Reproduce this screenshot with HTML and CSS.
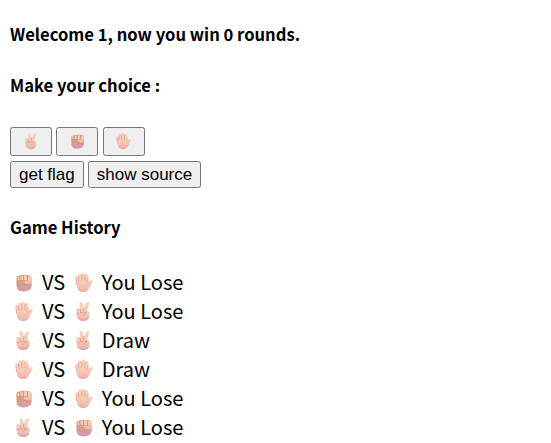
FILE: index.html
```html
<!DOCTYPE html>
<html lang="en">
<head>
<meta charset="utf-8">
<title>Game</title>
<link rel="stylesheet" href="styles.css">
</head>
<body>
<svg class="defs" width="0" height="0" aria-hidden="true">
  <defs>
    <linearGradient id="skin" x1="0" y1="0" x2="0" y2="1"><stop offset="0" stop-color="#f6d5bd"/><stop offset=".55" stop-color="#f6c8b7"/><stop offset="1" stop-color="#eeb0ac"/></linearGradient>
    <linearGradient id="dark" x1="0" y1="0" x2=".25" y2="1"><stop offset="0" stop-color="#c79882"/><stop offset=".55" stop-color="#cf9f8f"/><stop offset="1" stop-color="#d99ba5"/></linearGradient>
    <symbol id="victory" viewBox="0 0 27 29">
      <path fill="url(#skin)" d="M6.2 14.5Q5.5 11 8 10.7L9.9 12 9.4 6.3C9.3 4.7 11.8 4.4 12.2 6L13.5 10.8 16.3 5.7C17.1 4.2 19.6 5.1 19 6.8L17.1 13Q19.6 14.6 19.4 18.5C19.2 22.2 16.7 24 13 24 9 24 6.7 21.6 6.4 18Z"/>
      <path fill="none" stroke="#d79b8b" stroke-width=".8" stroke-linecap="round" d="M6.6 16.2Q9 17.7 10.5 15.7L10 12.2M10.5 15.7Q14.4 14.2 16.5 16Q14 16.4 13 18.5M13.5 10.8 13.2 13.8"/>
      <path fill="#dd9ca5" opacity=".6" d="M7 20Q12.5 23.8 18.9 20.3Q17 24 13 24 9 24 7 20Z"/>
    </symbol>
    <symbol id="fist" viewBox="0 0 27 29">
      <path fill="url(#dark)" d="M6.2 10Q6.3 7.3 9 7.7 11 6.3 13.3 7.1 15.8 6.1 17.6 7.3 21.3 6.8 21.4 10L21.5 17C21.4 21.6 18 23.5 13.5 23.4 9 23.4 6.6 21.6 6.3 18Z"/>
      <path fill="#f3cba9" d="M9.9 8Q11.7 6.4 12.9 8.1V12H10.2ZM13.8 8Q15.7 6 17 8V12H13.8ZM17.8 8.2Q21.2 6.9 21.2 10.2V13H17.8ZM7 10Q7 8.2 8.8 8.5L9.2 12H7.3Z"/>
      <path fill="#efbda8" d="M12 13.5Q15 11.8 20.5 12.8 22.3 14.6 20.4 16.2 17.8 16.9 14.8 15.5Z"/>
      <path fill="#d99b8c" d="M7 12.5Q10 11.5 13 13L14.5 15.5Q11 17 7 15Z"/>
      <path fill="none" stroke="#c58a7c" stroke-width=".5" stroke-linecap="round" d="M9.6 8.5 9.9 12M13.3 8V12M17.4 8V12M14 16.4Q17 17.3 20 16.8"/>
    </symbol>
    <symbol id="palm" viewBox="0 0 27 29">
      <path fill="url(#skin)" d="M5.2 10Q5.2 8.1 6.6 8.1 7.7 8.1 8.1 9.3L8 6.8Q8.2 5.4 9.6 5.4 10.9 5.4 11.2 6.5L11.4 5.8Q11.9 4.4 13.2 4.5 14.6 4.6 14.8 6L15.1 7.1Q15.8 5.7 17 6 18.3 6.3 18.2 7.8L17.9 14.2 20.4 12.3Q21.6 11.5 22.3 12.5 22.8 13.2 22 14.5L19.2 19.5C17.9 22.4 16.2 24 13 24 9.4 24 7.4 22 6.7 18.5Z"/>
      <path fill="none" stroke="#d99c90" stroke-width=".65" stroke-linecap="round" d="M5.6 11.2 6.5 16.6M8.2 8.7 8.6 13M11.3 7 11.6 12.5M14.8 7 14.8 12.5M17.8 10V14.3"/>
      <path fill="#e4a6a9" opacity=".55" d="M7 20Q9 22.7 13 22.6 17 22.5 19 20Q16.5 24 13 24 8.7 24 7 20Z"/>
    </symbol>
  </defs>
</svg>
<h5>Welecome 1, now you win 0 rounds.</h5>
<h5>Make your choice :</h5>
<div class="controls">
  <div class="choices">
    <button aria-label="scissors"><svg><use href="#victory"/></svg></button>
    <button aria-label="rock"><svg><use href="#fist"/></svg></button>
    <button aria-label="paper"><svg><use href="#palm"/></svg></button>
  </div>
  <div class="actions"><button>get flag</button><button>show source</button></div>
</div>
<h5>Game History</h5>
<div class="history">
  <div class="row"><svg><use href="#fist"/></svg><span>VS</span><svg><use href="#palm"/></svg><span>You Lose</span></div>
  <div class="row"><svg><use href="#palm"/></svg><span>VS</span><svg><use href="#victory"/></svg><span>You Lose</span></div>
  <div class="row"><svg><use href="#victory"/></svg><span>VS</span><svg><use href="#victory"/></svg><span>Draw</span></div>
  <div class="row"><svg><use href="#palm"/></svg><span>VS</span><svg><use href="#palm"/></svg><span>Draw</span></div>
  <div class="row"><svg><use href="#fist"/></svg><span>VS</span><svg><use href="#palm"/></svg><span>You Lose</span></div>
  <div class="row"><svg><use href="#victory"/></svg><span>VS</span><svg><use href="#fist"/></svg><span>You Lose</span></div>
</div>
</body>
</html>
```
FILE: styles.css
```css
body {
  margin: 0;
  padding: 22px 10px 0;
  background: #fff;
  color: #000;
  font: 20px/29px "Noto Sans CJK SC", sans-serif;
  overflow: hidden;
}
.defs { display: block; }
h5 {
  margin: 0 0 27px;
  font-size: 16.6px;
  line-height: 24px;
  font-weight: 700;
}
.controls { margin: 30px 0 27px; }
.choices, .actions { display: flex; gap: 4px; }
.choices { gap: 4.4px; margin-bottom: 5px; }
button {
  box-sizing: border-box;
  height: 27px;
  padding: 0 8px;
  border: 1px solid #767676;
  border-radius: 2.5px;
  background: #efefef;
  color: #000;
  font: 17px/23px "Liberation Sans", Arial, sans-serif;
}
.choices button {
  display: flex;
  align-items: center;
  justify-content: center;
  width: 42px;
  height: 29px;
  padding: 0;
}
.choices svg { width: 22.8px; height: 24.4px; }
.history { margin-top: 28px; }
.row {
  display: flex;
  align-items: center;
  gap: 4.6px;
  height: 29px;
}
.row svg { width: 27.4px; height: 29px; margin-top: 2px; }
```
